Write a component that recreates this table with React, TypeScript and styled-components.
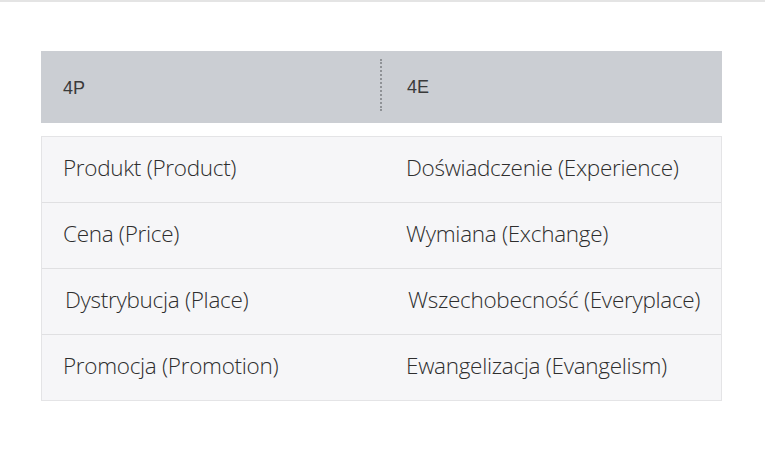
import React from "react";
import styled, { createGlobalStyle } from "styled-components";

const Global = createGlobalStyle`
  html, body { margin: 0; padding: 0; background: #ffffff; }
  body { font-family: "Open Sans", "Liberation Sans", sans-serif; }
`;

const Page = styled.div`
  width: 765px;
  height: 454px;
  border-top: 2px solid #e4e4e4;
  box-sizing: border-box;
  padding: 49px 43px 0 41px;
`;

const Header = styled.div`
  display: grid;
  grid-template-columns: 339px 1fr;
  height: 72px;
  background: #cbced3;
  font-family: "Liberation Sans", Arial, sans-serif;
  font-size: 18px;
  color: #3a3a3a;
`;

const HeadCell = styled.div<{ $shift?: number; $divider?: boolean }>`
  display: flex;
  align-items: center;
  padding-left: ${(p) => (p.$divider ? 27 : 22)}px;
  padding-top: ${(p) => p.$shift ?? 0}px;
  position: relative;
  ${(p) =>
    p.$divider
      ? `&::before {
    content: "";
    position: absolute;
    left: 0;
    top: 8px;
    height: 52px;
    border-left: 2px dotted #8f9296;
  }`
      : ""}
`;

const Body = styled.div`
  margin-top: 13px;
  border: 1px solid #e4e4e6;
  background: #f6f6f8;
`;

const Row = styled.div`
  display: grid;
  grid-template-columns: 342px 1fr;
  height: 65px;
  & + & {
    border-top: 1px solid #e0e0e2;
  }
`;

const Cell = styled.div<{ $indent?: number }>`
  display: flex;
  align-items: center;
  padding-left: ${(p) => p.$indent ?? 21}px;
  padding-bottom: 4px;
  font-size: 22.5px;
  font-weight: 300;
  letter-spacing: -0.3px;
  color: #2e2e2e;
  white-space: nowrap;
`;

const rows: [string, string, number][] = [
  ["Produkt (Product)", "Doświadczenie (Experience)", 0],
  ["Cena (Price)", "Wymiana (Exchange)", 0],
  ["Dystrybucja (Place)", "Wszechobecność (Everyplace)", 2],
  ["Promocja (Promotion)", "Ewangelizacja (Evangelism)", 0],
];

export default function App() {
  return (
    <>
      <Global />
      <Page>
        <Header>
          <HeadCell $shift={3}>4P</HeadCell>
          <HeadCell $divider $shift={-3}>4E</HeadCell>
        </Header>
        <Body>
          {rows.map(([a, b, off]) => (
            <Row key={a}>
              <Cell $indent={21 + off}>{a}</Cell>
              <Cell $indent={22 + off}>{b}</Cell>
            </Row>
          ))}
        </Body>
      </Page>
    </>
  );
}
